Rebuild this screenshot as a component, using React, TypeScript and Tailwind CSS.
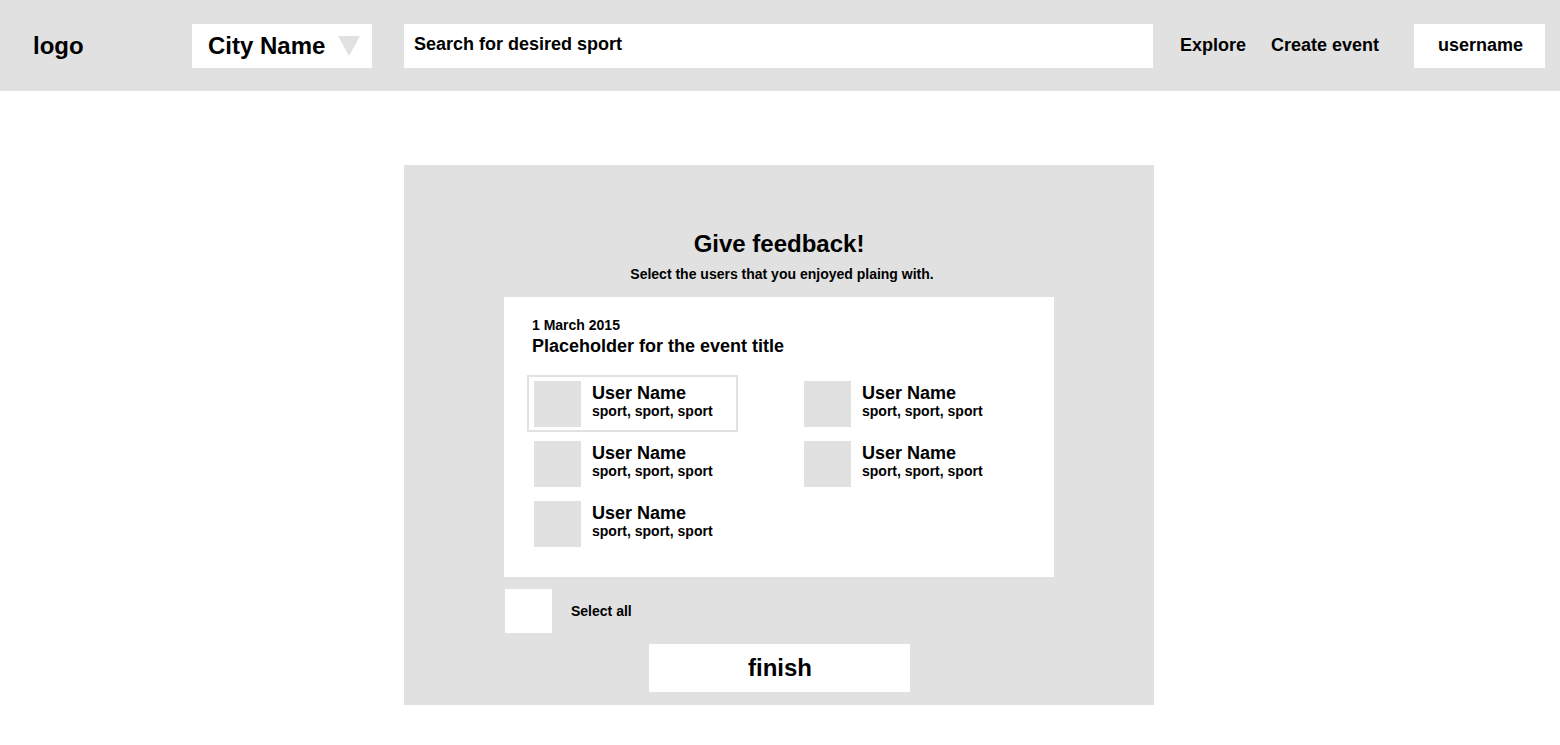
import React from "react";

const users = [
  { name: "User Name", sports: "sport, sport, sport", selected: true },
  { name: "User Name", sports: "sport, sport, sport", selected: false },
  { name: "User Name", sports: "sport, sport, sport", selected: false },
  { name: "User Name", sports: "sport, sport, sport", selected: false },
  { name: "User Name", sports: "sport, sport, sport", selected: false },
];

function UserItem({ name, sports, selected }: { name: string; sports: string; selected: boolean }) {
  return (
    <div
      className={`flex border-2 pl-[5px] pt-[4px] pb-[3px] ${selected ? "border-[#e1e1e1]" : "border-transparent"}`}
    >
      <div className="w-[47px] h-[46px] bg-[#e1e1e1] shrink-0" />
      <div className="ml-[11px] mt-[2px] flex flex-col">
        <div className="text-[18px] leading-[20px] font-bold">{name}</div>
        <div className="mt-[1px] text-[14px] leading-[14px] font-bold">{sports}</div>
      </div>
    </div>
  );
}

export default function App() {
  return (
    <div
      className="min-h-[745px] bg-white text-black"
      style={{ fontFamily: '"Liberation Sans", Arial, Helvetica, sans-serif' }}
    >
      <header className="h-[91px] bg-[#e1e1e1] flex items-center">
        <div className="w-[192px] pl-[33px] text-[24px] leading-[28px] font-bold">logo</div>
        <div className="w-[180px] h-[44px] bg-white flex items-center pl-[16px]">
          <span className="text-[24px] leading-[28px] font-bold">City Name</span>
          <svg className="ml-[13px]" width="22" height="20" viewBox="0 0 22 20">
            <polygon points="0,0 22,0 11,20" fill="#e1e1e1" />
          </svg>
        </div>
        <div className="ml-[32px] w-[749px] h-[44px] bg-white flex items-center pl-[10px] pb-[3px]">
          <span className="text-[18px] leading-[20px] font-bold">Search for desired sport</span>
        </div>
        <nav className="ml-[27px] pb-[2px] flex items-center gap-[25px] text-[18px] leading-[20px] font-bold">
          <span>Explore</span>
          <span>Create event</span>
        </nav>
        <div className="ml-[35px] w-[131px] h-[44px] bg-white flex items-center justify-center pb-[2px] pl-[2px]">
          <span className="text-[18px] leading-[20px] font-bold">username</span>
        </div>
      </header>

      <main className="ml-[404px] mt-[74px] w-[750px] h-[540px] bg-[#e1e1e1] flex flex-col items-center pt-[65px]">
        <h1 className="text-[24px] leading-[28px] font-bold">Give feedback!</h1>
        <p className="mt-[8px] pl-[6px] text-[14px] leading-[16px] font-bold">
          Select the users that you enjoyed plaing with.
        </p>

        <section className="mt-[15px] w-[550px] h-[280px] bg-white pt-[20px]">
          <div className="pl-[28px] text-[14px] leading-[16px] font-bold">1 March 2015</div>
          <div className="mt-[2px] pl-[28px] text-[18px] leading-[22px] font-bold">Placeholder for the event title</div>
          <div className="mt-[18px] ml-[23px] grid grid-cols-[211px_211px] gap-x-[59px] gap-y-[3px]">
            {users.map((u, i) => (
              <UserItem key={i} {...u} />
            ))}
          </div>
        </section>

        <div className="mt-[12px] w-[550px] flex items-center">
          <div className="ml-[1px] w-[47px] h-[44px] bg-white" />
          <span className="ml-[19px] text-[14px] leading-[16px] font-bold">Select all</span>
        </div>

        <button className="mt-[11px] w-[261px] h-[48px] bg-white flex items-center justify-center pl-[2px]">
          <span className="text-[24px] leading-[28px] font-bold">finish</span>
        </button>
      </main>
    </div>
  );
}
